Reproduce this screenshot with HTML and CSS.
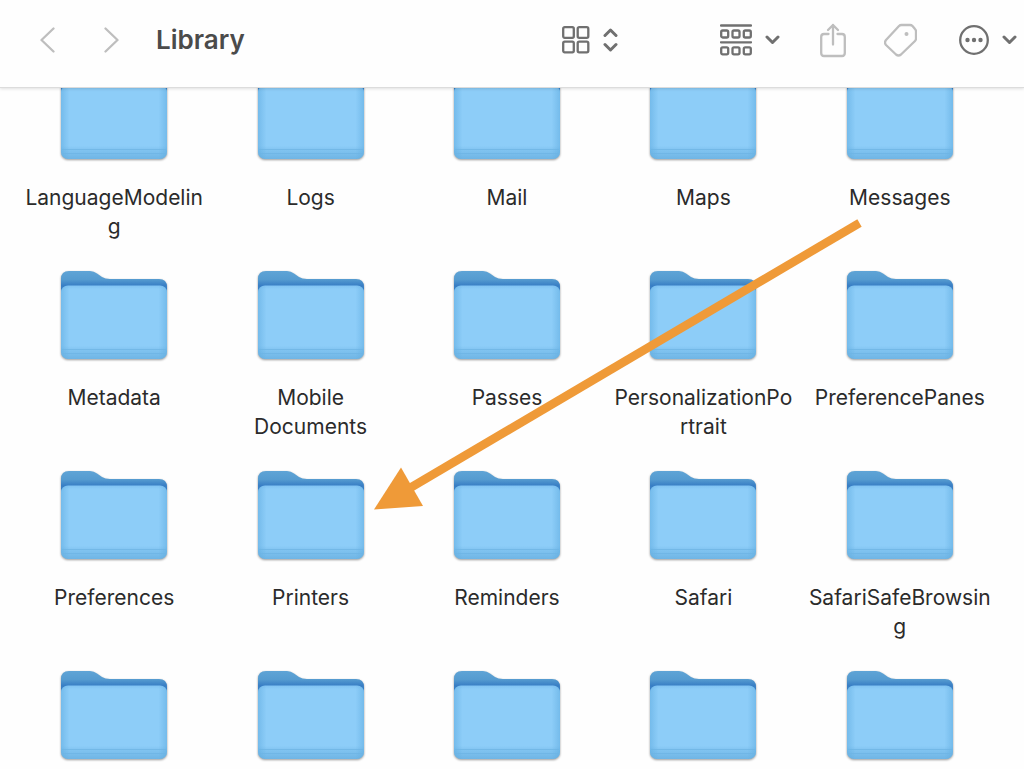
FILE: index.html
```
<!DOCTYPE html>
<html lang="en">
<head>
  <meta charset="utf-8">
  <meta name="viewport" content="width=device-width, initial-scale=1">
  <title>Library</title>
  <link rel="stylesheet" href="styles.css">
</head>

<body>
  <!-- shared shapes -->
  <svg class="sprite" width="0" height="0" aria-hidden="true">
    <defs>
      <linearGradient id="tab" x1="0" y1="3" x2="0" y2="20" gradientUnits="userSpaceOnUse">
        <stop offset="0" stop-color="#5fa4d6"/>
        <stop offset="0.5" stop-color="#559bd0"/>
        <stop offset="0.85" stop-color="#397fc5"/>
      </linearGradient>
      <linearGradient id="front" x1="0" y1="0" x2="0" y2="1">
        <stop offset="0" stop-color="#80c3f2"/>
        <stop offset="0.05" stop-color="#8dcdf8"/>
        <stop offset="0.82" stop-color="#8dcdf8"/>
        <stop offset="0.88" stop-color="#80c3f0"/>
        <stop offset="1" stop-color="#6fb5e5"/>
      </linearGradient>
      <linearGradient id="edges" x1="0" y1="0" x2="1" y2="0">
        <stop offset="0" stop-color="#5ca9de" stop-opacity="0.5"/>
        <stop offset="0.08" stop-color="#5ca9de" stop-opacity="0"/>
        <stop offset="0.92" stop-color="#5ca9de" stop-opacity="0"/>
        <stop offset="1" stop-color="#5ca9de" stop-opacity="0.5"/>
      </linearGradient>
      <symbol id="folder" viewBox="0 0 112 100">
        <path fill="url(#tab)" d="M3 82V11Q3 3 11 3H32Q36 3 39 5.500L44 9Q47 11 52 11H101Q109 11 109 19V82Z"/>
        <rect x="3" y="17.500" width="106" height="73.500" rx="7" fill="url(#front)"/>
        <rect x="3" y="17.500" width="106" height="73.500" rx="7" fill="url(#edges)"/>
        <path stroke="#6db4e4" d="M4 81.500H108M4 85.500H108" opacity="0.7"/>
      </symbol>
      <symbol id="chevron" viewBox="0 0 15 10">
        <path d="M2 2L7.500 7.500L13 2"/>
      </symbol>
    </defs>
  </svg>

  <div class="window">
    <header class="toolbar">
      <nav class="history">
        <button type="button" class="tool faded" aria-label="Back">
          <svg width="15" height="26" viewBox="0 0 15 26"><path d="M13.500 1.500L1.500 13L13.500 24.500"/></svg>
        </button>
        <button type="button" class="tool faded" aria-label="Forward">
          <svg width="15" height="26" viewBox="0 0 15 26"><path d="M1.500 1.500L13.500 13L1.500 24.500"/></svg>
        </button>
      </nav>
      <h1 class="title">Library</h1>

      <button type="button" class="tool view" aria-label="Icon view">
        <svg width="28" height="28" viewBox="0 0 28 28">
          <rect x="1.200" y="1.200" width="10.600" height="10.600" rx="1.500"/>
          <rect x="15.700" y="1.200" width="10.600" height="10.600" rx="1.500"/>
          <rect x="1.200" y="15.700" width="10.600" height="10.600" rx="1.500"/>
          <rect x="15.700" y="15.700" width="10.600" height="10.600" rx="1.500"/>
        </svg>
        <svg class="bold" width="15" height="26" viewBox="0 0 15 26"><path d="M2 8.500L7.500 3L13 8.500M2 17.500L7.500 23L13 17.500"/></svg>
      </button>
      <button type="button" class="tool group" aria-label="Group items">
        <svg width="32" height="32" viewBox="0 0 32 32">
          <path d="M1 1.500H31M1 18.300H31"/>
          <rect x="1.200" y="6.500" width="7" height="7" rx="1.500"/>
          <rect x="12.500" y="6.500" width="7" height="7" rx="1.500"/>
          <rect x="23.800" y="6.500" width="7" height="7" rx="1.500"/>
          <rect x="1.200" y="23.300" width="7" height="7" rx="1.500"/>
          <rect x="12.500" y="23.300" width="7" height="7" rx="1.500"/>
          <rect x="23.800" y="23.300" width="7" height="7" rx="1.500"/>
        </svg>
        <svg class="bold" width="15" height="10"><use href="#chevron"/></svg>
      </button>
      <button type="button" class="tool share faded" aria-label="Share">
        <svg width="26" height="36" viewBox="0 0 26 36">
          <path d="M8.500 12H4Q1.200 12 1.200 15V31Q1.200 34 4 34H22Q24.800 34 24.800 31V15Q24.800 12 22 12H17.500"/>
          <path d="M13 22.500V3M8 8L13 3L18 8"/>
        </svg>
      </button>
      <button type="button" class="tool tags faded" aria-label="Edit tags">
        <svg width="33" height="34" viewBox="0 0 33 34">
          <path d="M17.500 2H26Q27.500 2 28.500 3L31 6Q32 7 32 8.500V15.500Q32 17 31 18L17 31.500Q14.500 33.500 12 31.500L2 22Q0 19.500 2 17L15 3Q16 2 17.500 2Z"/>
          <circle class="dot" cx="22.500" cy="11" r="2"/>
        </svg>
      </button>
      <button type="button" class="tool more" aria-label="More actions">
        <svg width="30" height="30" viewBox="0 0 30 30">
          <circle cx="15" cy="15" r="13.800"/>
          <circle class="dot" cx="8.500" cy="15" r="2.200"/>
          <circle class="dot" cx="15" cy="15" r="2.200"/>
          <circle class="dot" cx="21.500" cy="15" r="2.200"/>
        </svg>
        <svg class="bold" width="15" height="10"><use href="#chevron"/></svg>
      </button>
    </header>

    <main class="files">
      <ul class="grid">
        <li class="item"><svg class="folder"><use href="#folder"/></svg><span class="name">LanguageModelin<wbr>g</span></li>
        <li class="item"><svg class="folder"><use href="#folder"/></svg><span class="name">Logs</span></li>
        <li class="item"><svg class="folder"><use href="#folder"/></svg><span class="name">Mail</span></li>
        <li class="item"><svg class="folder"><use href="#folder"/></svg><span class="name">Maps</span></li>
        <li class="item"><svg class="folder"><use href="#folder"/></svg><span class="name">Messages</span></li>

        <li class="item"><svg class="folder"><use href="#folder"/></svg><span class="name">Metadata</span></li>
        <li class="item"><svg class="folder"><use href="#folder"/></svg><span class="name">Mobile Documents</span></li>
        <li class="item"><svg class="folder"><use href="#folder"/></svg><span class="name">Passes</span></li>
        <li class="item"><svg class="folder"><use href="#folder"/></svg><span class="name">PersonalizationPo<wbr>rtrait</span></li>
        <li class="item"><svg class="folder"><use href="#folder"/></svg><span class="name">PreferencePanes</span></li>

        <li class="item"><svg class="folder"><use href="#folder"/></svg><span class="name">Preferences</span></li>
        <li class="item"><svg class="folder"><use href="#folder"/></svg><span class="name">Printers</span></li>
        <li class="item"><svg class="folder"><use href="#folder"/></svg><span class="name">Reminders</span></li>
        <li class="item"><svg class="folder"><use href="#folder"/></svg><span class="name">Safari</span></li>
        <li class="item"><svg class="folder"><use href="#folder"/></svg><span class="name">SafariSafeBrowsin<wbr>g</span></li>

        <li class="item"><svg class="folder"><use href="#folder"/></svg></li>
        <li class="item"><svg class="folder"><use href="#folder"/></svg></li>
        <li class="item"><svg class="folder"><use href="#folder"/></svg></li>
        <li class="item"><svg class="folder"><use href="#folder"/></svg></li>
        <li class="item"><svg class="folder"><use href="#folder"/></svg></li>
      </ul>
      <!-- pointer to the Printers folder -->
      <svg class="arrow" width="500" height="300" viewBox="0 0 500 300" aria-hidden="true">
        <path d="M489.500 8L40 273" stroke="#ef9a38" stroke-width="8.500"/>
        <path d="M4 294.500L31 252.500L53 291Z" fill="#ef9a38"/>
      </svg>
    </main>
  </div>
</body>
</html>
```
FILE: styles.css
```
* {
  box-sizing: border-box;
}

body {
  margin: 0;
  background: #fefefe;
  color: #2b2b2b;
  font-family: Inter, "Liberation Sans", sans-serif;
}

.sprite {
  position: absolute;
}

.window {
  display: flex;
  flex-direction: column;
  height: 100vh;
  overflow: hidden;
}

/* toolbar */
.toolbar {
  display: flex;
  align-items: center;
  flex: none;
  height: 88px;
  padding: 0 7px 7px 40px;
  background: #fefefe;
  border-bottom: 1px solid #dcdcdc;
  box-shadow: 0 1px 3px rgba(0, 0, 0, 0.12);
  z-index: 1;
}

.history {
  display: flex;
  gap: 49px;
}

.title {
  margin: 0 auto 0 37px;
  font-size: 26px;
  font-weight: 600;
  line-height: 32px;
  color: #4b4b4b;
}

.tool {
  display: flex;
  align-items: center;
  gap: 13px;
  padding: 0;
  border: 0;
  background: none;
  color: #707070;
}

.tool svg {
  fill: none;
  stroke: currentColor;
  stroke-width: 2.3;
  stroke-linecap: round;
  stroke-linejoin: round;
}

.tool .bold {
  stroke-width: 3;
}

.tool .dot {
  fill: currentColor;
  stroke: none;
}

.faded {
  color: #bebebe;
}

.group {
  margin-left: 102px;
}

.share {
  margin-left: 40px;
}

.tags {
  margin-left: 38px;
}

.more {
  margin-left: 42px;
}

/* folders */
.files {
  position: relative;
  flex: 1;
  min-height: 0;
  overflow: hidden;
}

.grid {
  display: grid;
  grid-template-columns: repeat(5, 1fr);
  grid-auto-rows: 200px;
  margin: -20px 0 0;
  padding: 0 26px 0 16px;
  list-style: none;
}

.item {
  display: flex;
  flex-direction: column;
  align-items: center;
  gap: 15px;
}

.folder {
  flex: none;
  width: 112px;
  height: 100px;
  filter: drop-shadow(0 1px 1px rgba(0, 0, 0, 0.4));
}

.name {
  max-width: 184px;
  font-size: 21px;
  line-height: 29px;
  text-align: center;
}

.arrow {
  position: absolute;
  left: 370px;
  top: 127px;
}
```
